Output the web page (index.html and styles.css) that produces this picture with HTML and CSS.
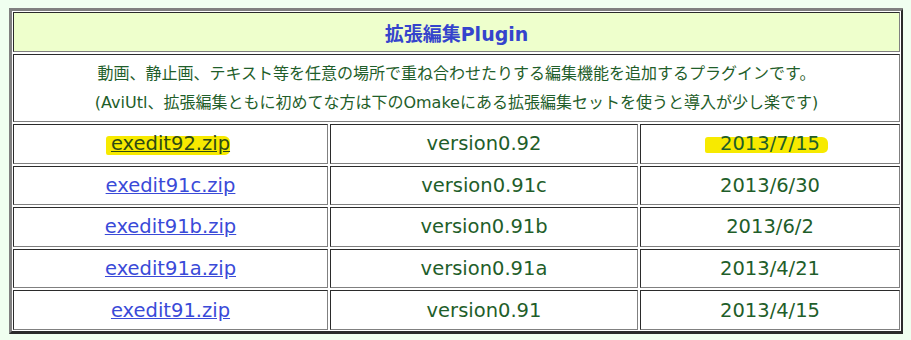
FILE: index.html
```html
<!DOCTYPE html>
<html lang="ja">
<head>
    <meta charset="UTF-8" />
    <title>拡張編集Plugin</title>
    <link rel="stylesheet" href="styles.css">
</head>
<body>
    <div class="plugin-frame">
        <table class="plugin-table">
            <colgroup>
                <col class="col-file">
                <col class="col-ver">
                <col class="col-date">
            </colgroup>
            <tr>
                <th colspan="3" class="plugin-title">拡張編集Plugin</th>
            </tr>
            <tr>
                <td colspan="3" class="plugin-desc">
                    <p>動画、静止画、テキスト等を任意の場所で重ね合わせたりする編集機能を追加するプラグインです。</p>
                    <p>(AviUtl、拡張編集ともに初めてな方は下のOmakeにある拡張編集セットを使うと導入が少し楽です)</p>
                </td>
            </tr>
            <tr class="file-row">
                <td><a href="#" class="marker marker-link">exedit92.zip</a></td>
                <td>version0.92</td>
                <td><span class="marker marker-date">2013/7/15</span></td>
            </tr>
            <tr class="file-row">
                <td><a href="#">exedit91c.zip</a></td>
                <td>version0.91c</td>
                <td>2013/6/30</td>
            </tr>
            <tr class="file-row">
                <td><a href="#">exedit91b.zip</a></td>
                <td>version0.91b</td>
                <td>2013/6/2</td>
            </tr>
            <tr class="file-row">
                <td><a href="#">exedit91a.zip</a></td>
                <td>version0.91a</td>
                <td>2013/4/21</td>
            </tr>
            <tr class="file-row">
                <td><a href="#">exedit91.zip</a></td>
                <td>version0.91</td>
                <td>2013/4/15</td>
            </tr>
        </table>
    </div>
</body>
</html>
```

FILE: styles.css
```css
* {
    box-sizing: border-box;
}

body {
    margin: 8px;
    background: #f0fff0;
    color: #1f5e2a;
    font-family: "DejaVu Sans", "Noto Sans CJK JP", sans-serif;
}

/* old-style border="3" table look: raised frame, sunken cells */
.plugin-frame {
    width: 895px;
    margin-left: 1px;
    background: #fff;
    border: 3px solid;
    border-color: #808080 #2b2b2b #2b2b2b #808080;
}

.plugin-table {
    border-collapse: separate;
    border-spacing: 2px;
    margin: -1px;
    width: 889px;
    table-layout: fixed;
}

.plugin-table th,
.plugin-table td {
    border: 1px solid;
    border-color: #2b2b2b #808080 #808080 #2b2b2b;
    padding: 0;
    text-align: center;
    vertical-align: middle;
}

.plugin-title {
    height: 40px;
    background: #eeffcc;
    color: #3544cc;
    font-size: 19px;
    font-weight: bold;
}

.plugin-desc {
    height: 68px;
    font-size: 16px;
}

.plugin-desc p {
    margin: 0;
    line-height: 29px;
}

.file-row td {
    height: 39.6px;
    font-size: 19.5px;
}

.col-file { width: 315px; }
.col-ver { width: 308px; }
.col-date { width: 260px; }

.file-row a {
    color: #3a4ad8;
    text-decoration: underline;
}

/* yellow highlighter strokes */
.marker {
    display: inline-block;
    background: #f7ea00;
    border-radius: 3px 6px 5px 2px;
}

.marker-link {
    line-height: 16px;
    padding: 0 0 3px 5px;
    margin-left: -5px;
}

.file-row .marker-link {
    color: #2e4a14;
}

.marker-date {
    line-height: 14px;
    padding: 0 8px 2px 15px;
    margin-left: -7px;
}
```
